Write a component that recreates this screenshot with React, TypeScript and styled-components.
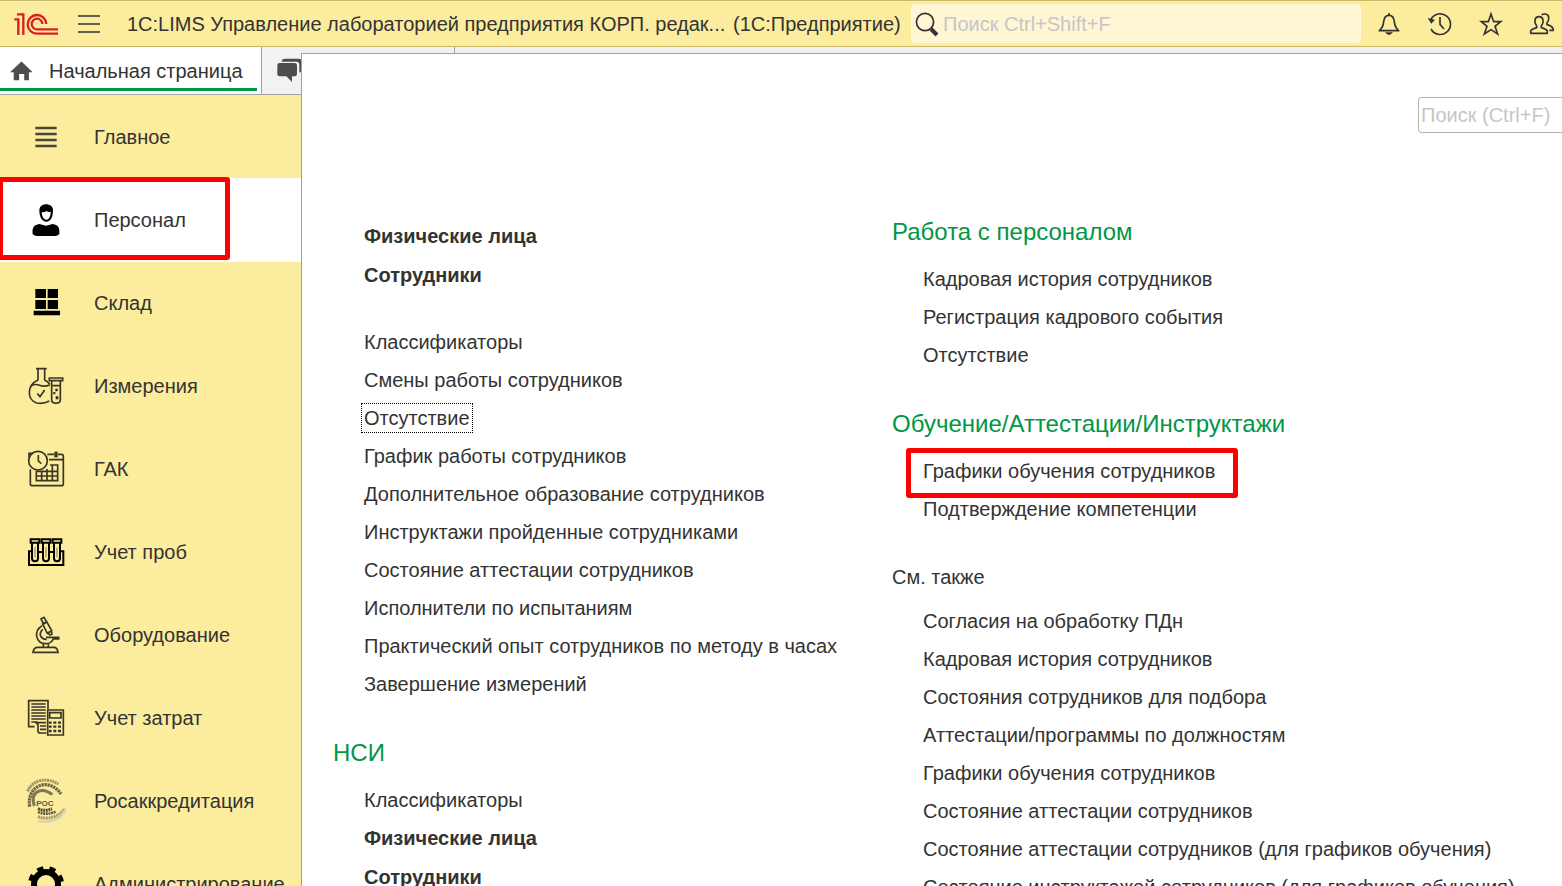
import React from 'react';
import styled, { createGlobalStyle, css } from 'styled-components';

const Global = createGlobalStyle`
  *, *::before, *::after { box-sizing: border-box; }
  body {
    margin: 0;
    overflow: hidden;
    background: #fff;
    color: #333;
    font: 20px/24px "Liberation Sans", Arial, sans-serif;
  }
  button, input { font: inherit; color: inherit; }
  ul { list-style: none; margin: 0; padding: 0; }
  svg { display: block; flex: none; overflow: visible; }
`;

const Page = styled.div`
  height: 100vh;
  display: flex;
  flex-direction: column;
  overflow: hidden;
`;

const Header = styled.header`
  flex: none;
  display: flex;
  align-items: center;
  height: 47px;
  padding-left: 14px;
  background: #fbec9e;
  border-top: 1px solid #c9b96a;
  border-bottom: 1px solid #c9b96a;
`;

const IconButton = styled.button`
  display: flex;
  align-items: center;
  justify-content: center;
  flex: none;
  width: 51px;
  height: 40px;
  padding: 0;
  border: 0;
  background: none;
  cursor: pointer;
`;

const MenuButton = styled(IconButton)`
  width: 62px;
`;

const AppTitle = styled.div`
  flex: none;
  display: flex;
  width: 791px;
  padding-left: 7px;
  white-space: pre;
`;

const TitleText = styled.span`
  width: 606px;
`;

const GlobalSearch = styled.label`
  flex: 1;
  display: flex;
  align-items: center;
  gap: 4px;
  height: 39px;
  padding-left: 4px;
  border-radius: 4px;
  background: #fef6d5;
`;

const SearchInput = styled.input`
  flex: 1;
  min-width: 0;
  padding: 0;
  border: 0;
  outline: 0;
  background: none;
  &::placeholder { color: #c6c6c6; opacity: 1; }
`;

const Actions = styled.div`
  flex: none;
  display: flex;
  width: 201px;
  padding-left: 2px;
  overflow: hidden;
`;

const Body = styled.div`
  flex: 1;
  min-height: 0;
  display: flex;
`;

const Side = styled.div`
  flex: none;
  display: flex;
  flex-direction: column;
  width: 301px;
  overflow: hidden;
`;

const Tabs = styled.div`
  flex: none;
  display: flex;
  height: 48px;
  background: #f2f2f2;
  border-bottom: 1px solid #a0a0a0;
`;

const HomeTab = styled.button`
  flex: none;
  display: flex;
  align-items: center;
  gap: 16px;
  width: 262px;
  padding: 0 0 0 10px;
  border: 0;
  border-right: 1px solid #a0a0a0;
  background: linear-gradient(#009646, #009646) 0 41px / 257px 3px no-repeat #fff;
  white-space: nowrap;
`;

const ChatTab = styled.button`
  flex: none;
  width: 60px;
  padding: 0 0 2px 15px;
  border: 0;
  background: none;
`;

const Sections = styled.nav`
  flex: 1;
  background: #fbec9e;
`;

const Section = styled.a<{ $active?: boolean }>`
  position: relative;
  display: flex;
  align-items: center;
  gap: 28px;
  height: 83px;
  padding-left: 26px;
  color: inherit;
  text-decoration: none;
  white-space: nowrap;
  ${p => p.$active && css`background: #fff; box-shadow: 0 1px #fff;`}
`;

const Mark = styled.span`
  position: absolute;
  border: 5px solid #f00;
  border-radius: 3px;
  pointer-events: none;
`;

const SectionMark = styled(Mark)`
  inset: -1px 71px 1px -2px;
`;

const LinkMark = styled(Mark)`
  inset: -3px -23px -7px -17px;
`;

const Main = styled.main`
  flex: 1;
  min-width: 0;
  display: flex;
  flex-direction: column;
`;

const TabStrip = styled.div`
  flex: none;
  height: 6px;
  background: #f2f2f2;
  &::before {
    content: "";
    display: block;
    width: 154px;
    height: 6px;
    border-right: 1px solid #a0a0a0;
  }
`;

const Panel = styled.section`
  flex: 1;
  min-height: 0;
  overflow: hidden;
  padding: 43px 0 0 31px;
  border-top: 1px solid #a0a0a0;
  border-left: 1px solid #a0a0a0;
`;

const PanelSearch = styled.label`
  display: flex;
  width: 144px;
  height: 36px;
  margin: 0 0 82px auto;
  padding-left: 2px;
  border: 1px solid #b4b4b4;
  border-right: 0;
  border-radius: 4px 0 0 4px;
`;

const Columns = styled.div`
  display: grid;
  grid-template-columns: 559px 1fr;
`;

const Column = styled.div<{ $top?: number }>`
  padding-top: ${p => p.$top ?? 0}px;
  white-space: nowrap;
`;

const Heading = styled.h2`
  margin: 33px 0 11px;
  color: #009646;
  font-size: 24px;
  font-weight: 400;
  line-height: 34px;
  &:first-child { margin-top: 0; }
`;

const SubHeading = styled.h3`
  margin: 32px 0 8px;
  font-size: 20px;
  font-weight: 400;
  line-height: 34px;
`;

const Links = styled.ul`
  padding-left: 31px;
  & + & { margin-top: 28px; }
`;

const LinkRow = styled.li<{ $bold?: boolean }>`
  display: flex;
  align-items: center;
  height: ${p => (p.$bold ? 39 : 38)}px;
  padding-bottom: ${p => (p.$bold ? 1 : 0)}px;
  font-weight: ${p => (p.$bold ? 700 : 400)};
`;

const Link = styled.a<{ $focused?: boolean; $marked?: boolean }>`
  position: relative;
  color: inherit;
  text-decoration: none;
  ${p => p.$focused && css`
    margin-left: -3px;
    padding: 2px;
    border: 1px dotted #000;
  `}
  ${p => p.$marked && css`
    padding: 8px 0;
  `}
`;

type Item = string | { text: string; bold?: boolean; focused?: boolean; marked?: boolean };

const LinkList = ({ items }: { items: Item[] }) => (
  <Links>
    {items.map((it, i) => {
      const item = typeof it === 'string' ? { text: it } : it;
      return (
        <LinkRow key={i} $bold={item.bold}>
          <Link href="#" $focused={item.focused} $marked={item.marked}>
            {item.text}
            {item.marked && <LinkMark />}
          </Link>
        </LinkRow>
      );
    })}
  </Links>
);

const Logo = () => (
  <svg width="44" height="22" viewBox="42 36 132 66" fill="none" stroke="#dc1e24" strokeWidth="7">
    <path d="M43 55h12v47M51 40h19v62" />
    <path d="M139 69a28 28 0 1 0-28 29h63" />
    <path d="M127 69a16 16 0 1 0-16 16h63" />
  </svg>
);

const Burger = () => (
  <svg width="22" height="18" viewBox="0 0 22 18" stroke="#333" strokeWidth="1.5">
    <path d="M0 1h22M0 9h22M0 17h22" />
  </svg>
);

const Magnifier = () => (
  <svg width="24" height="24" viewBox="0 0 24 24" fill="none" stroke="#333">
    <circle cx="10" cy="10" r="8.6" strokeWidth="1.7" />
    <path d="M16 17l6 6" strokeWidth="4" />
  </svg>
);

const line = { fill: 'none', stroke: '#333', strokeWidth: 5, strokeLinejoin: 'round' as const };

const Bell = () => (
  <svg width="24" height="24" viewBox="21 35 72 72" {...line}>
    <path d="M28 91c8-7 12-13 13-27 1-11 6-19 16-19s15 8 16 19c1 14 5 20 13 27z" />
    <path d="M54 42h6" strokeWidth="7" />
    <path d="M45 96h24q-12 16-24 0z" fill="#333" stroke="none" />
  </svg>
);

const History = () => (
  <svg width="24" height="24" viewBox="175 35 72 72" {...line}>
    <path d="M184 57a31 31 0 1 1 0 29M211 50v22l12 14" />
    <path d="M174 53l22 5-11 12z" fill="#333" stroke="none" />
  </svg>
);

const Star = () => (
  <svg width="24" height="24" viewBox="327 35 72 72" {...line} strokeLinejoin="miter">
    <path d="M363 41l8 23h21l-17 14 8 23-20-13-20 13 8-23-17-14h21z" />
  </svg>
);

const People = () => (
  <svg width="26" height="24" viewBox="477 35 78 72" {...line}>
    <path d="M482 99v-6q1-6 18-11v-5c-9-12-7-28 7-28s16 16 7 28v5q17 5 18 11v6z" />
    <path d="M515 44q3-3 9-3c14 0 16 15 7 27v5q19 5 19 17h-12" />
  </svg>
);

const House = () => (
  <svg width="23" height="20" viewBox="30 178 68 58" fill="#4d4d4d">
    <path d="M64 179l33 32H86v23H72v-18H57v18H41v-23H30z" />
  </svg>
);

const Chat = () => (
  <svg width="26" height="24" viewBox="44 34 78 72" fill="#4d4d4d">
    <path d="M58 45q1-9 9-9h42q9 0 9 9v25q0 6-7 8V54q0-9-9-9z" />
    <path d="M52 49h45q7 0 7 7v26q0 7-7 7h-8v17L72 89H52q-7 0-7-7V56q0-7 7-7z" />
  </svg>
);

/* Section icons share a 40x40 box; one pixel is three drawing units. */
const box = (x: number, y: number) => ({ width: 40, height: 40, viewBox: `${x} ${y} 120 120` });
const ink = { fill: 'none', stroke: '#3a3524', strokeWidth: 5 };

const MainIcon = () => (
  <svg {...box(78, 351)} stroke="#4a4636" strokeWidth="8">
    <path d="M106 384h64M106 402h64M106 420h64M106 438h64" />
  </svg>
);

const PersonIcon = () => (
  <svg {...box(78, 90)}>
    <path d="M98 192c-2-20 4-27 20-30l20 5 20-5c16 3 22 10 20 30q-6 7-14 6H112q-10 0-14-6z" />
    <path d="M118 121c0-24 41-24 41 0 0 22-8 34-20 34s-21-12-21-34z" />
    <path d="M125 126q8 2 14-3 7 4 13 2c0 14-5 24-13 24s-13-9-14-23z" fill="#fff" />
  </svg>
);

const WarehouseIcon = () => (
  <svg {...box(78, 339)}>
    <path d="M106 357h32v27h-32zM143 357h31v27h-31zM106 390h32v27h-32zM143 390h31v27h-31zM101 422h79v14h-79z" />
  </svg>
);

const MeasureIcon = () => (
  <svg {...box(78, 48)} {...ink}>
    <path d="M108 56h32M114 58v32c-34 16-34 58-4 69q20 4 38-6M134 58v32q10 5 15 12M93 108q12-8 26-2t31-2M112 131l8 9 14-20" />
    <path d="M148 84h40v8h-40zM155 93v56c0 14 26 14 26 0V93M158 107h22" />
    <path d="M166 116h7v8h-7zM160 126h6v7h-6zM167 139h8v9h-8z" fill="#2e2a1c" stroke="none" />
  </svg>
);

const CalendarIcon = () => (
  <svg {...box(78, 297)} {...ink}>
    <circle cx="114" cy="332" r="28" />
    <path d="M115 315v18l9 8M87 322v-12h12M91 358v44q0 5 5 5h88q6 0 6-6v-82q0-6-6-6h-10M142 313h20M147 329h42" />
    <path d="M168 305v17" strokeWidth="10" />
    <path d="M150 345h23v47h-64v-28h64M125 364v28M141 357v35M109 378h64M157 345v47" />
  </svg>
);

const TubesIcon = () => (
  <svg {...box(78, 36)} fill="none" stroke="#000" strokeWidth="6">
    <path d="M96 94h-9v41h103V94h-10M116 96h12M149 96h12" />
    <path d="M92 58h26v10H92zM125 58h26v10h-26zM158 58h26v10h-26zM96 68v47c0 12 18 12 18 0V68M129 68v47c0 12 18 12 18 0V68M162 68v47c0 12 18 12 18 0V68" />
    <path d="M105 82v30M138 82v30M171 82v30" strokeWidth="3" opacity=".5" />
  </svg>
);

const MicroscopeIcon = () => (
  <svg {...box(78, 285)} {...ink}>
    <path d="M99 397q2-15 14-15h49q10 0 12 15zM130 370v12M145 370v12" />
    <path d="M126 317c-27 18-18 54 11 54 14 0 19-5 23-14h16v-5h-38M128 328c-15 16-4 31 12 30" />
    <path d="M123 297l9-5 8 14-9 6zM128 312l12-7 15 27-13 8zM145 340l5 5 6-3-2-9" />
  </svg>
);

const CostIcon = () => (
  <svg {...box(78, 24)} {...ink}>
    <path d="M104 110H86V32h58v25M106 98q8 0 8 10v14q0 7 7 7h18M108 98h30M120 108h18M120 118h18" />
    <path d="M94 42h43M94 51h43M94 60h43M94 69h43M94 78h43M94 87h43M94 96h18" strokeWidth="4" />
    <path d="M143 60h47v75h-47zM149 68h34v16h-34z" />
    <path d="M146 98h38M146 110h38M146 123h38" strokeWidth="7" strokeDasharray="9 5" />
  </svg>
);

const RosIcon = () => (
  <svg {...box(78, 273)} fill="none" stroke="#3f3a2b">
    <path d="M83 304c14-34 54-44 92-22" strokeWidth="9" strokeDasharray="6 2" opacity=".5" />
    <path d="M89 350c-10-62 56-92 94-38" strokeWidth="10" strokeDasharray="7 2" opacity=".75" />
    <path d="M103 348c-14-46 24-58 54-34" strokeWidth="9" opacity=".65" />
    <path d="M114 356q22 10 42 0" strokeWidth="9" strokeDasharray="6 2" opacity=".9" />
    <path d="M114 366c22 8 38 6 54-2" strokeWidth="8" strokeDasharray="6 2" opacity=".8" />
    <path d="M114 380c28 10 62 2 80-24" strokeWidth="9" strokeDasharray="6 2" opacity=".45" />
    <path d="M114 393c36 8 74-8 82-34" strokeWidth="8" stroke="#d9d2b4" />
    <text x="109" y="347" fontSize="24" fontWeight="700" fill="#5d573f" stroke="none">РОС</text>
  </svg>
);

const GearIcon = () => (
  <svg {...box(78, 522)} fill="none" stroke="#000">
    <circle cx="138" cy="582" r="36" strokeWidth="18" />
    <circle cx="138" cy="582" r="47" strokeWidth="14" strokeDasharray="18.45 18.45" strokeDashoffset="-9" />
  </svg>
);

const sections: [string, () => React.JSX.Element][] = [
  ['Главное', MainIcon],
  ['Персонал', PersonIcon],
  ['Склад', WarehouseIcon],
  ['Измерения', MeasureIcon],
  ['ГАК', CalendarIcon],
  ['Учет проб', TubesIcon],
  ['Оборудование', MicroscopeIcon],
  ['Учет затрат', CostIcon],
  ['Росаккредитация', RosIcon],
  ['Администрирование', GearIcon],
];

export default function App() {
  return (
    <Page>
      <Global />
      <Header>
        <Logo />
        <MenuButton aria-label="Меню"><Burger /></MenuButton>
        <AppTitle>
          <TitleText>1C:LIMS Управление лабораторией предприятия КОРП. редак...</TitleText>
          <span>(1С:Предприятие)</span>
        </AppTitle>
        <GlobalSearch>
          <Magnifier />
          <SearchInput aria-label="Поиск" placeholder="Поиск Ctrl+Shift+F" />
        </GlobalSearch>
        <Actions>
          <IconButton aria-label="Уведомления"><Bell /></IconButton>
          <IconButton aria-label="История"><History /></IconButton>
          <IconButton aria-label="Избранное"><Star /></IconButton>
          <IconButton aria-label="Пользователи"><People /></IconButton>
        </Actions>
      </Header>
      <Body>
        <Side>
          <Tabs>
            <HomeTab><House />Начальная страница</HomeTab>
            <ChatTab aria-label="Обсуждения"><Chat /></ChatTab>
          </Tabs>
          <Sections>
            {sections.map(([name, Icon], i) => (
              <Section key={name} href="#" $active={i === 1}>
                <Icon />
                {name}
                {i === 1 && <SectionMark />}
              </Section>
            ))}
          </Sections>
        </Side>
        <Main>
          <TabStrip />
          <Panel>
            <PanelSearch>
              <SearchInput aria-label="Поиск в разделе" placeholder="Поиск (Ctrl+F)" />
            </PanelSearch>
            <Columns>
              <Column $top={2}>
                <LinkList items={[
                  { text: 'Физические лица', bold: true },
                  { text: 'Сотрудники', bold: true },
                ]} />
                <LinkList items={[
                  'Классификаторы',
                  'Смены работы сотрудников',
                  { text: 'Отсутствие', focused: true },
                  'График работы сотрудников',
                  'Дополнительное образование сотрудников',
                  'Инструктажи пройденные сотрудниками',
                  'Состояние аттестации сотрудников',
                  'Исполнители по испытаниям',
                  'Практический опыт сотрудников по методу в часах',
                  'Завершение измерений',
                ]} />
                <Heading>НСИ</Heading>
                <LinkList items={[
                  'Классификаторы',
                  { text: 'Физические лица', bold: true },
                  { text: 'Сотрудники', bold: true },
                ]} />
              </Column>
              <Column>
                <Heading>Работа с персоналом</Heading>
                <LinkList items={[
                  'Кадровая история сотрудников',
                  'Регистрация кадрового события',
                  'Отсутствие',
                ]} />
                <Heading>Обучение/Аттестации/Инструктажи</Heading>
                <LinkList items={[
                  { text: 'Графики обучения сотрудников', marked: true },
                  'Подтверждение компетенции',
                ]} />
                <SubHeading>См. также</SubHeading>
                <LinkList items={[
                  'Согласия на обработку ПДн',
                  'Кадровая история сотрудников',
                  'Состояния сотрудников для подбора',
                  'Аттестации/программы по должностям',
                  'Графики обучения сотрудников',
                  'Состояние аттестации сотрудников',
                  'Состояние аттестации сотрудников (для графиков обучения)',
                  'Состояние инструктажей сотрудников (для графиков обучения)',
                ]} />
              </Column>
            </Columns>
          </Panel>
        </Main>
      </Body>
    </Page>
  );
}
